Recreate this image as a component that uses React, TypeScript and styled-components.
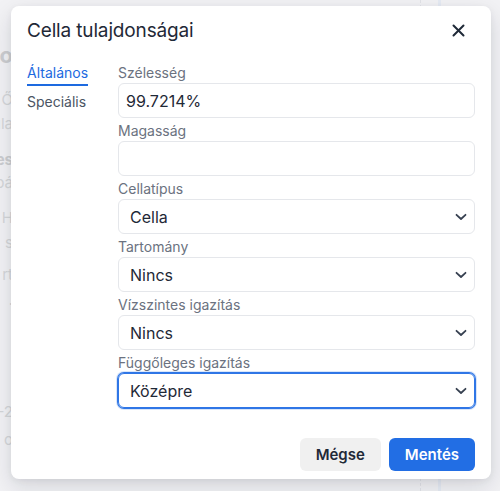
import React from 'react';
import styled, { createGlobalStyle } from 'styled-components';

const GlobalStyle = createGlobalStyle`
  * {
    box-sizing: border-box;
    font-family: Inter, 'Noto Sans', sans-serif;
  }

  html, body {
    margin: 0;
    padding: 0;
    height: 100%;
    background: #f3f4f6;
    overflow: hidden;
  }
`;

const Backdrop = styled.div`
  position: fixed;
  inset: 0;
  display: flex;
  background: #f1f2f4;
`;

const BackColumn = styled.div`
  display: flex;
  flex-direction: column;
  width: 13px;
  padding-top: 40px;
  color: #c2c4c7;
  font-size: 15px;
`;

const BackLine = styled.div<{ $gap: number; $bold?: boolean; $size?: number }>`
  margin-top: ${(p) => p.$gap}px;
  height: 22px;
  line-height: 22px;
  display: flex;
  justify-content: flex-end;
  font-weight: ${(p) => (p.$bold ? 700 : 400)};
  font-size: ${(p) => p.$size ?? 15}px;
  color: ${(p) => (p.$bold ? '#b7b9bc' : '#c4c6c9')};
  white-space: nowrap;
`;

const BackCanvas = styled.div`
  flex: 1;
  display: flex;
  justify-content: flex-end;
  gap: 17px;
  padding-right: 59px;
`;

const DashedRule = styled.div`
  width: 1px;
  border-left: 1px dashed #d9dbe0;
`;

const BlueRule = styled.div`
  width: 3px;
  background: #dfe6f3;
`;

const Overlay = styled.div`
  position: fixed;
  inset: 0;
  background: rgba(243, 244, 246, 0.35);
  display: flex;
  align-items: flex-start;
  justify-content: flex-start;
  padding: 6px 0 0 11px;
`;

const Dialog = styled.div`
  width: 480px;
  height: 473px;
  background: #ffffff;
  border-radius: 8px;
  box-shadow: 0 8px 24px rgba(15, 23, 42, 0.13), 0 2px 6px rgba(15, 23, 42, 0.06);
  padding: 0 16px 8px 16px;
  display: flex;
  flex-direction: column;
`;

const Header = styled.div`
  height: 49px;
  display: flex;
  align-items: center;
  justify-content: space-between;
`;

const Title = styled.h2`
  margin: 0;
  font-size: 19px;
  font-weight: 400;
  color: #1f2937;
  letter-spacing: -0.15px;
`;

const CloseButton = styled.button`
  border: 0;
  background: none;
  padding: 0;
  width: 20px;
  height: 20px;
  margin-right: 7px;
  display: flex;
  align-items: center;
  justify-content: center;
  color: #1f2937;
  cursor: pointer;
`;

const Body = styled.div`
  margin-top: 8px;
  display: grid;
  grid-template-columns: 91px 1fr;
`;

const TabList = styled.div`
  display: flex;
  flex-direction: column;
  align-items: flex-start;
  gap: 6px;
`;

const Tab = styled.div<{ $active?: boolean }>`
  font-size: 14px;
  line-height: 20px;
  color: ${(p) => (p.$active ? '#1d6ae0' : '#4b5563')};
  border-bottom: 2px solid ${(p) => (p.$active ? '#1d6ae0' : 'transparent')};
  padding-bottom: 1px;
`;

const Form = styled.div`
  display: flex;
  flex-direction: column;
`;

const Field = styled.div`
  display: flex;
  flex-direction: column;
  margin-bottom: 3px;
`;

const Label = styled.label`
  font-size: 14px;
  line-height: 20px;
  color: #6b7280;
`;

const Input = styled.div`
  height: 35px;
  border: 1px solid #e5e7eb;
  border-radius: 6px;
  padding: 0 7px;
  display: flex;
  align-items: center;
  font-size: 16px;
  color: #1f2937;
`;

const Select = styled.div<{ $focused?: boolean }>`
  height: 35px;
  border: 1px solid ${(p) => (p.$focused ? '#2f76e6' : '#e5e7eb')};
  box-shadow: ${(p) => (p.$focused ? '0 0 0 1px #2f76e6, 0 0 0 2px rgba(47,118,230,0.18)' : 'none')};
  border-radius: 6px;
  padding: 0 7px 0 11px;
  display: flex;
  align-items: center;
  justify-content: space-between;
  font-size: 16px;
  color: #1f2937;
`;

const Footer = styled.div`
  margin-top: auto;
  display: flex;
  justify-content: flex-end;
  gap: 8px;
`;

const Button = styled.button<{ $primary?: boolean }>`
  height: 33px;
  padding: 0 16px;
  border: 0;
  border-radius: 6px;
  font-size: 15px;
  font-weight: 600;
  background: ${(p) => (p.$primary ? '#226ee4' : '#f0f0f0')};
  color: ${(p) => (p.$primary ? '#ffffff' : '#1f2937')};
  cursor: pointer;
`;

const Chevron = () => (
  <svg width="12" height="8" viewBox="0 0 12 8" fill="none">
    <path d="M1.5 1.8 L6 6 L10.5 1.8" stroke="#374151" strokeWidth="1.8" strokeLinecap="round" strokeLinejoin="round" />
  </svg>
);

const fields: { label: string; value: string; select?: boolean; focused?: boolean }[] = [
  { label: 'Szélesség', value: '99.7214%' },
  { label: 'Magasság', value: '' },
  { label: 'Cellatípus', value: 'Cella', select: true },
  { label: 'Tartomány', value: 'Nincs', select: true },
  { label: 'Vízszintes igazítás', value: 'Nincs', select: true },
  { label: 'Függőleges igazítás', value: 'Középre', select: true, focused: true },
];

// fragments of the page that peek out left of the dialog
const backLines = [
  { text: 'o', gap: 4, bold: true, size: 22 },
  { text: 'Ő', gap: 23 },
  { text: 'ula', gap: 2 },
  { text: 'es', gap: 14, bold: true },
  { text: 'pá', gap: 1 },
  { text: 'H', gap: 13 },
  { text: 's', gap: 3 },
  { text: 'rt', gap: 10 },
  { text: '.', gap: 3 },
  { text: '-2', gap: 90 },
  { text: 'o', gap: 6 },
];

export default function App() {
  return (
    <>
      <GlobalStyle />
      <Backdrop>
        <BackColumn>
          {backLines.map((l, i) => (
            <BackLine key={i} $gap={l.gap} $bold={l.bold} $size={l.size}>
              {l.text}
            </BackLine>
          ))}
        </BackColumn>
        <BackCanvas>
          <DashedRule />
          <BlueRule />
        </BackCanvas>
      </Backdrop>
      <Overlay>
        <Dialog>
          <Header>
            <Title>Cella tulajdonságai</Title>
            <CloseButton aria-label="Bezárás">
              <svg width="13" height="13" viewBox="0 0 13 13">
                <path d="M1.5 1.5 L11.5 11.5 M11.5 1.5 L1.5 11.5" stroke="#1f2937" strokeWidth="2" strokeLinecap="round" />
              </svg>
            </CloseButton>
          </Header>
          <Body>
            <TabList>
              <Tab $active>Általános</Tab>
              <Tab>Speciális</Tab>
            </TabList>
            <Form>
              {fields.map((f) => (
                <Field key={f.label}>
                  <Label>{f.label}</Label>
                  {f.select ? (
                    <Select $focused={f.focused}>
                      <span>{f.value}</span>
                      <Chevron />
                    </Select>
                  ) : (
                    <Input>{f.value}</Input>
                  )}
                </Field>
              ))}
            </Form>
          </Body>
          <Footer>
            <Button>Mégse</Button>
            <Button $primary>Mentés</Button>
          </Footer>
        </Dialog>
      </Overlay>
    </>
  );
}
